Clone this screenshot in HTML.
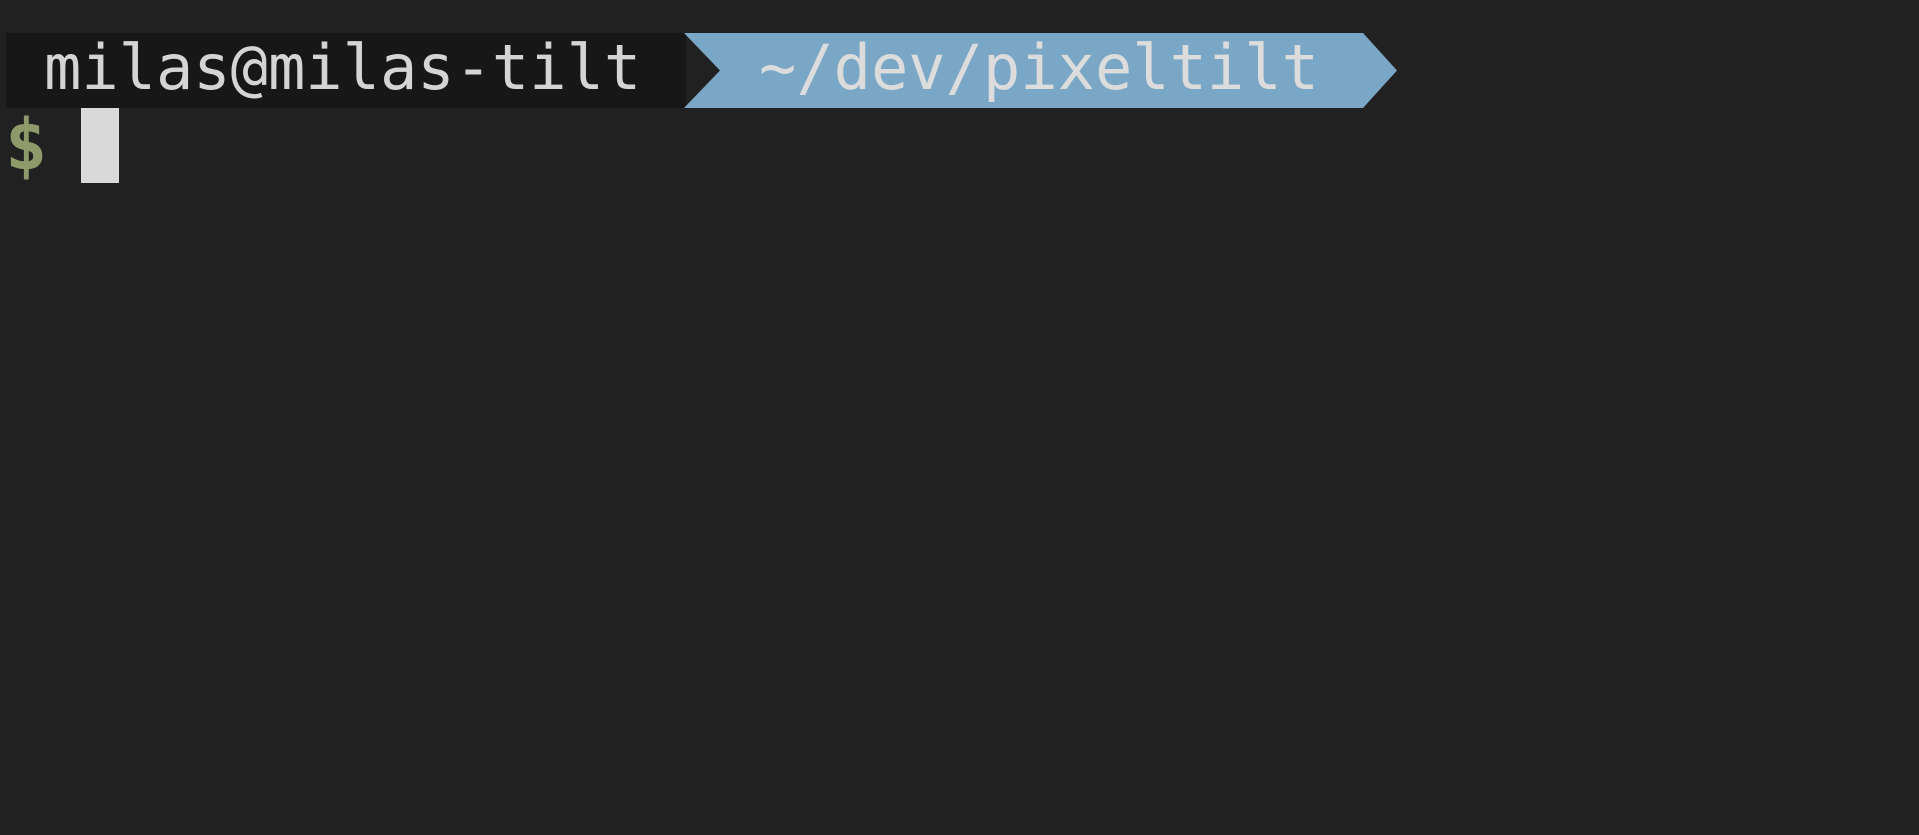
<!DOCTYPE html>
<html><head><style>
html,body{margin:0;padding:0;width:1919px;height:835px;background:#212121;overflow:hidden}
.t{position:absolute;font-family:"DejaVu Sans Mono","Liberation Mono",monospace;font-size:62px;line-height:1;white-space:pre;color:#d4d4d4}
</style></head><body>
<svg width="1919" height="835" style="position:absolute;left:0;top:0">
<rect x="6" y="33" width="680" height="75" fill="#171717"/>
<polygon points="684,33 1363,33 1397,70.5 1363,108 684,108 720,70.5" fill="#7ba7c7"/>
<rect x="81" y="108" width="38" height="75" fill="#d9d9d9"/>
</svg>
<div class="t" style="left:44px;top:37px">milas@milas-tilt</div>
<div class="t" style="left:759px;top:37px;color:#dcdcdc">~/dev/pixeltilt</div>
<div class="t" style="left:5px;top:110px;color:#8f9a6a;font-weight:bold;font-size:70px">$</div>
</body></html>
